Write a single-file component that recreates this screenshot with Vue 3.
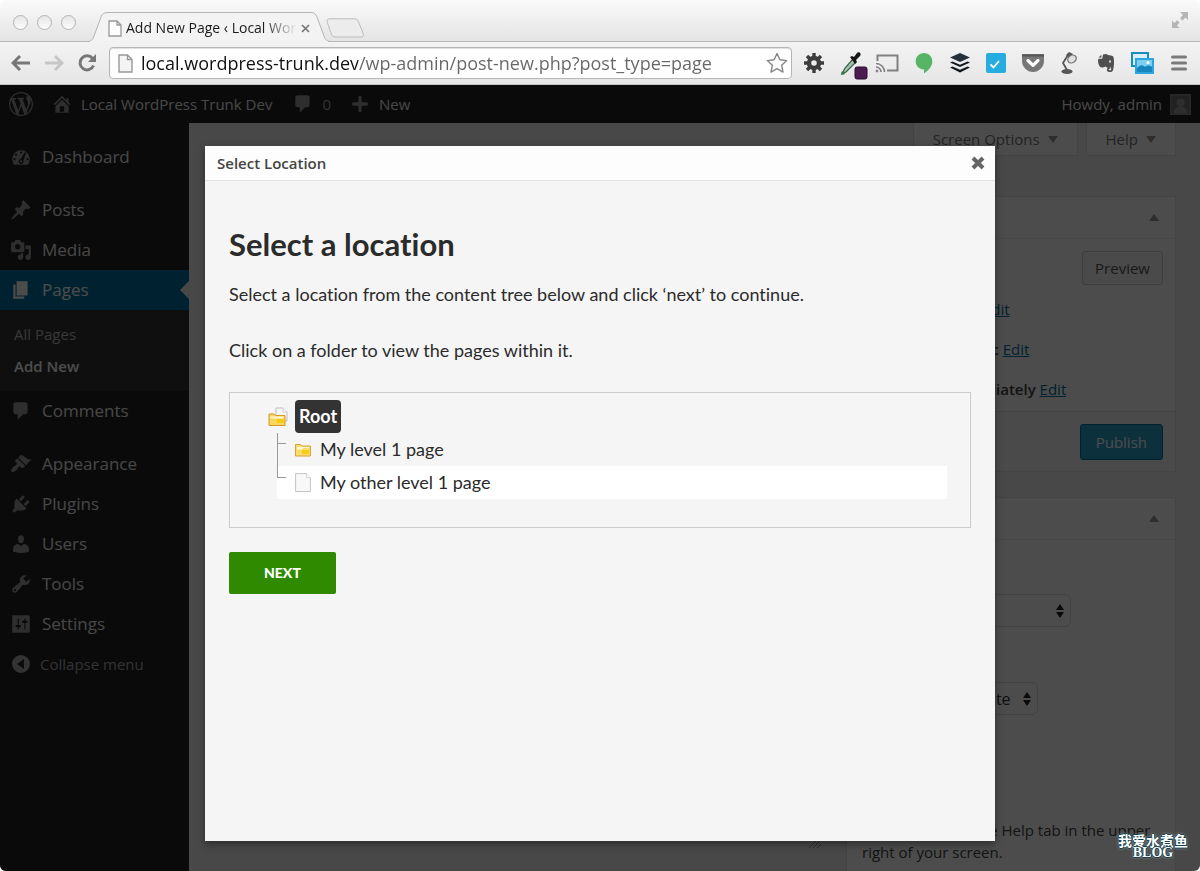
<script setup>
import { ref } from 'vue'

const url = ref('local.wordpress-trunk.dev/wp-admin/post-new.php?post_type=page')
const parent = ref('(no parent)')
const template = ref('Default Template')

const icons = {
  dashboard: 'M3.8 17h12.4A8 8 0 1 0 3.8 17zM10 5a1 1 0 1 1 0 2 1 1 0 0 1 0-2zM5.6 7a1 1 0 1 1 0 2 1 1 0 0 1 0-2zM4 11a1 1 0 1 1 0 2 1 1 0 0 1 0-2zM16 11a1 1 0 1 1 0 2 1 1 0 0 1 0-2zM13.6 5.6l1 .6-2.4 7.2a2.2 2.2 0 1 1-2.6-1.5zM10 13a1 1 0 1 0 0 2 1 1 0 0 0 0-2z',
  posts: 'M10.44 3.02l1.82-1.82 6.36 6.35-1.83 1.82c-1.05-.68-2.48-.57-3.41.36l-.75.75c-.92.93-1.04 2.35-.35 3.41l-1.83 1.82-2.41-2.41-2.8 2.79c-.42.42-3.38 2.71-3.8 2.29s1.86-3.39 2.28-3.81l2.79-2.79L4.1 9.36l1.83-1.82c1.05.69 2.48.57 3.4-.36l.75-.75c.93-.92 1.05-2.35.36-3.41z',
  media: 'M13 11V4c0-.55-.45-1-1-1h-1.67L9 1H5L3.67 3H2c-.55 0-1 .45-1 1v7c0 .55.45 1 1 1h10c.55 0 1-.45 1-1zM7 4.5c1.38 0 2.5 1.12 2.5 2.5S8.38 9.5 7 9.5 4.5 8.38 4.5 7 5.62 4.5 7 4.5zM14 6h5v10.5c0 1.38-1.12 2.5-2.5 2.5S14 17.88 14 16.5s1.12-2.5 2.5-2.5c.17 0 .34.02.5.05V9h-3V6zm-4 8.05V13h2v3.5c0 1.38-1.12 2.5-2.5 2.5S7 17.88 7 16.5 8.12 14 9.5 14c.17 0 .34.02.5.05z',
  pages: 'M6 15V2h10v13H6zm-1 1h8v2H3V5h2v11z',
  comments: 'M5 2h9c1.1 0 2 .9 2 2v7c0 1.1-.9 2-2 2h-2l-5 5v-5H5c-1.1 0-2-.9-2-2V4c0-1.1.9-2 2-2z',
  appearance: 'M14.48 11.06L7.41 3.99l1.5-1.5c.5-.56 2.3-.47 3.51.32 1.21.8 1.43 1.28 2.91 2.1 1.18.64 2.45 1.26 4.45.85zm-.71.71L6.7 4.7 4.93 6.47c-.39.39-.39 1.02 0 1.41l1.06 1.06c.39.39.39 1.03 0 1.42-.6.6-1.43 1.11-2.21 1.69-.35.26-.7.53-1.01.84C1.43 14.23.4 16.08 1.4 17.07c.99 1 2.84-.03 4.18-1.36.31-.31.58-.66.85-1.02.57-.78 1.08-1.61 1.69-2.21.39-.39 1.02-.39 1.41 0l1.06 1.06c.39.39 1.02.39 1.41 0z',
  plugins: 'M13.11 4.36L9.87 7.6 8 5.73l3.24-3.24c.35-.34 1.05-.2 1.56.32.52.51.66 1.21.31 1.55zm-8 1.77l.91-1.12 9.01 9.01-1.19.84c-.71.71-2.63 1.16-3.82 1.16H6.14L4.9 17.26c-.59.59-1.54.59-2.12 0-.59-.58-.59-1.53 0-2.12l1.24-1.24v-3.88c0-1.13.4-3.19 1.09-3.89zm7.26 3.97l3.24-3.24c.34-.35 1.04-.21 1.55.31.52.51.66 1.21.31 1.55l-3.24 3.25z',
  users: 'M10 9.25c-2.27 0-2.73-3.44-2.73-3.44C7 4.02 7.82 2 9.97 2c2.16 0 2.98 2.02 2.71 3.81 0 0-.41 3.44-2.68 3.44zm0 2.57L12.72 10c2.39 0 4.52 2.33 4.52 4.53v2.49s-3.65 1.13-7.24 1.13c-3.65 0-7.24-1.13-7.24-1.13v-2.49c0-2.25 1.94-4.48 4.47-4.48z',
  tools: 'M16.68 9.77c-1.34 1.34-3.3 1.67-4.95.99l-5.41 6.52c-.99.99-2.59.99-3.58 0s-.99-2.59 0-3.57l6.52-5.42c-.68-1.65-.35-3.61.99-4.95 1.28-1.28 3.12-1.62 4.72-1.06l-2.89 2.89 2.82 2.82 2.86-2.87c.53 1.58.18 3.39-1.08 4.65zM3.81 16.21c.4.39 1.04.39 1.43 0 .4-.4.4-1.04 0-1.43-.39-.4-1.03-.4-1.43 0-.39.39-.39 1.03 0 1.43z',
  settings: 'M18 17V3c0-.6-.4-1-1-1H3c-.6 0-1 .4-1 1v14c0 .6.4 1 1 1h14c.6 0 1-.4 1-1zM8 11h1c.55 0 1 .45 1 1s-.45 1-1 1H8v1.5c0 .28-.22.5-.5.5s-.5-.22-.5-.5V13H6c-.55 0-1-.45-1-1s.45-1 1-1h1V5.5c0-.28.22-.5.5-.5s.5.22.5.5V11zm5-2h-1c-.55 0-1-.45-1-1s.45-1 1-1h1V5.5c0-.28.22-.5.5-.5s.5.22.5.5V7h1c.55 0 1 .45 1 1s-.45 1-1 1h-1v5.5c0 .28-.22.5-.5.5s-.5-.22-.5-.5V9z',
  collapse: 'M10 1a9 9 0 1 1 0 18 9 9 0 0 1 0-18zM13 5l-7 5 7 5z',
  home: 'M16 8.5l1.53 1.53-1.06 1.06L10 4.6l-6.47 6.49-1.06-1.06L10 2.5l4 4v-2h2v4zm-6-2.46l6 5.99V18H4v-5.97zM12 17v-5H8v5h4z',
  plus: 'M8.5 3h3v5.5H17v3h-5.500V17h-3v-5.500H3v-3h5.500z',
  wordpress: 'M20 10c0-5.51-4.49-10-10-10C4.48 0 0 4.49 0 10c0 5.52 4.48 10 10 10 5.51 0 10-4.48 10-10zM7.78 15.37L4.37 6.22c.55-.02 1.17-.08 1.17-.08.5-.06.44-1.13-.06-1.11 0 0-1.45.11-2.37.11-.18 0-.37 0-.58-.01C4.12 2.69 6.87 1.11 10 1.11c2.33 0 4.45.87 6.05 2.34-.68-.11-1.65.39-1.65 1.58 0 .74.45 1.36.9 2.1.35.61.55 1.36.55 2.46 0 1.49-1.4 5-1.4 5l-3.03-8.37c.54-.02.82-.17.82-.17.5-.05.44-1.25-.06-1.22 0 0-1.44.12-2.38.12-.87 0-2.33-.12-2.33-.12-.5-.03-.56 1.2-.06 1.22l.92.08 1.26 3.41zM17.41 10c.24-.64.74-1.87.43-4.25.7 1.29 1.05 2.71 1.05 4.25 0 3.29-1.73 6.24-4.4 7.78.97-2.59 1.94-5.2 2.92-7.78zM6.1 18.09C3.12 16.65 1.11 13.53 1.11 10c0-1.3.23-2.48.72-3.59C3.25 10.3 4.67 14.2 6.1 18.09zm4.03-6.63l2.58 6.98c-.86.29-1.76.45-2.71.45-.79 0-1.57-.11-2.29-.33.81-2.38 1.62-4.74 2.42-7.1z'
}

const menuGroups = [
  [{ id: 'dashboard', label: 'Dashboard' }],
  [
    { id: 'posts', label: 'Posts' },
    { id: 'media', label: 'Media' },
    { id: 'pages', label: 'Pages', current: true, children: ['All Pages', 'Add New'] },
    { id: 'comments', label: 'Comments' }
  ],
  [
    { id: 'appearance', label: 'Appearance' },
    { id: 'plugins', label: 'Plugins' },
    { id: 'users', label: 'Users' },
    { id: 'tools', label: 'Tools' },
    { id: 'settings', label: 'Settings' }
  ]
]

const publishRows = [
  { label: 'Status:', value: 'Draft' },
  { label: 'Visibility:', value: 'Public' },
  { label: 'Publish', value: 'immediately' }
]
</script>

<template>
  <div class="browser">
    <header class="chrome">
      <div class="tabstrip">
        <div class="lights"><i></i><i></i><i></i></div>
        <div class="tab">
          <svg class="tab-shape" width="242" height="30" viewBox="0 0 242 30" aria-hidden="true">
            <path d="M0 29.500C4 29 5 27 6 24L13 5C14 2 16 .5 19 .5H223C226 .5 228 2 229 5L236 24C237 27 238 29 242 29.500" fill="#f3f3f3" stroke="#b4b4b4" />
            <path d="M2 30H240" stroke="#f1f1f1" stroke-width="2" />
          </svg>
          <svg class="doc" width="14" height="17" viewBox="0 0 14 17"><path d="M1 1h8l4 4v11H1zM9 1v4h4" fill="#fdfdfd" stroke="#999" stroke-width="1.300" /></svg>
          <span class="tab-title">Add New Page ‹ Local Word</span>
          <button class="tab-close" aria-label="Close tab"><svg width="9" height="9" viewBox="0 0 9 9"><path d="M1 1l7 7M8 1L1 8" stroke="#777" stroke-width="1.700" /></svg></button>
        </div>
        <button class="newtab" aria-label="New tab">
          <svg width="40" height="20" viewBox="0 0 40 20"><path d="M4 .8H28C31 .8 32 2 33 5L37 15C38 18 37 19 35 19H10C7 19 6 18 5 15L1.500 5C.5 2 1 .8 4 .8z" fill="#ececec" stroke="#bcbcbc" /></svg>
        </button>
        <button class="expand" aria-label="Full screen">
          <svg width="18" height="18" viewBox="0 0 18 18" fill="#b5b5b5"><path d="M9 1h8v8l-2.500-2.500-3 3-2.500-2.500 3-3zM1 17V9.500l2.400 2.400 2.600-2.600 2.500 2.500-2.600 2.600L8.500 17z" /></svg>
        </button>
      </div>
      <div class="toolbar">
        <div class="nav">
          <button aria-label="Back"><svg width="20" height="20" viewBox="0 0 20 20"><path d="M19 10H3M9 3l-7 7 7 7" fill="none" stroke="#777" stroke-width="3" /></svg></button>
          <button aria-label="Forward"><svg width="20" height="20" viewBox="0 0 20 20"><path d="M1 10H17M11 3l7 7-7 7" fill="none" stroke="#c6c6c6" stroke-width="3" /></svg></button>
          <button aria-label="Reload"><svg width="20" height="20" viewBox="0 0 20 20"><path d="M15.500 5.500A7 7 0 1 0 16.500 12.500" fill="none" stroke="#777" stroke-width="3" /><path d="M19 1v8h-8z" fill="#777" /></svg></button>
        </div>
        <div class="address">
          <svg width="15" height="19" viewBox="0 0 15 19"><path d="M1 1h8.500l4.500 4.500V18H1zM9.500 1v4.500H14" fill="#f4f4f4" stroke="#999" stroke-width="1.400" /></svg>
          <input v-model="url" class="url" type="text" aria-label="Address" spellcheck="false" />
          <button aria-label="Bookmark"><svg width="22" height="22" viewBox="0 0 22 22"><path d="M11 1.500l2.900 6.300 6.800.8-5 4.700 1.300 6.800-6-3.400-6 3.400 1.300-6.800-5-4.700 6.800-.8z" fill="#fff" stroke="#858585" stroke-width="1.400" stroke-linejoin="round" /></svg></button>
        </div>
        <div class="extensions">
          <button aria-label="Settings gear"><svg width="20" height="20" viewBox="-10 -10 20 20"><circle r="5" fill="none" stroke="#3d3d3d" stroke-width="4.400" /><path d="M0-10V-6M0 10V6M-10 0H-6M10 0H6M-7-7l2.800 2.800M7 7L4.200 4.200M-7 7l2.800-2.800M7-7L4.200-4.200" stroke="#3d3d3d" stroke-width="3.400" /></svg></button>
          <button aria-label="Colour picker"><svg class="picker" width="28" height="30" viewBox="-3 -3 28 30"><path d="M13 8L5 17l-3 6 4-2 10-10" fill="#9fc5ac" stroke="#3f5f4b" stroke-width="1.200" /><circle cx="3" cy="22" r="1.800" fill="#2e7d46" /><path d="M10 6l2-1 2 1 3-4c2-2 5 1 3 3l-4 4 1 2-2 2z" fill="#161616" /><rect x="15" y="16" width="12" height="12" rx="2" fill="#4b1c52" stroke="#2b0e30" /></svg></button>
          <button aria-label="Cast"><svg width="24" height="20" viewBox="0 0 24 20" fill="none" stroke="#808080"><path d="M2.500 8V2.500H22.500V17.500H12" stroke-width="2" /><path d="M1 10.500a8.500 8.500 0 0 1 8.500 8.500M1 14a5 5 0 0 1 5 5" stroke-width="1.600" /><circle cx="2" cy="18" r="1" fill="#808080" /></svg></button>
          <button aria-label="Hangouts"><svg width="18" height="22" viewBox="0 0 18 22"><path d="M9 1c5 0 8.300 3.700 8.300 8.200 0 5.300-4 9.300-8.300 12.200v-4C4 17.400.7 13.800.7 9.200.7 4.700 4 1 9 1z" fill="#57b565" /></svg></button>
          <button aria-label="Buffer"><svg width="22" height="22" viewBox="0 0 22 22"><path d="M11 1l10 4.500L11 10 1 5.500z" fill="#26303a" /><path d="M1 10.500l2.500-1.100L11 12.800l7.500-3.400L21 10.500 11 15zM1 15.500l2.500-1.100L11 17.800l7.500-3.400L21 15.500 11 20.500z" fill="#111820" /></svg></button>
          <button aria-label="Tasks"><svg width="20" height="20" viewBox="0 0 20 20"><rect width="20" height="20" rx="2" fill="#27ace0" /><path d="M4.500 11.500l3 3L13 8" fill="none" stroke="#fff" stroke-width="1.800" /></svg></button>
          <button aria-label="Pocket"><svg width="24" height="20" viewBox="0 0 24 20"><path d="M2 1h20c.6 0 1 .4 1 1v6c0 6-5 11-11 11S1 14 1 8V2c0-.6.4-1 1-1z" fill="#777" /><path d="M1 1.500h22v2H1z" fill="#555" /><path d="M7 7.500l5 4.800 5-4.800" fill="none" stroke="#fff" stroke-width="3.200" stroke-linecap="round" stroke-linejoin="round" /></svg></button>
          <button aria-label="Lamp"><svg width="20" height="24" viewBox="0 0 20 24"><ellipse cx="8" cy="20.500" rx="5.500" ry="2.500" fill="#555" /><path d="M8 19L4 12l5-8" fill="none" stroke="#555" stroke-width="1.800" /><path d="M7 4l3-3 4 2-3 5z" fill="#555" /><ellipse cx="13" cy="8" rx="4.500" ry="3.600" transform="rotate(-35 13 8)" fill="#e0e0e0" stroke="#777" stroke-width="1.400" /></svg></button>
          <button aria-label="Evernote"><svg width="18" height="20" viewBox="0 0 18 20" fill="#505050"><path d="M6 1.500C8 .6 10 .8 11 2l4 .8c1.500.3 2 2 2 6 0 3-.3 6.500-1 8.500-.5 1.500-2 1.700-3.500 1.700-2 0-2.600-1.200-2.600-2.400 0-1.800 1.500-2.300 3.200-2l.3 1.300c-1-.2-1.700 0-1.700.7 0 .8 1.200.9 2 .6 1-.5.5-2.700-.4-2.900-1.300-.2-2 .6-3.300.3-1-.3-1-1-1.500-1-.7 1-4.500 1.200-5.700-.2C1.500 12 1 9.500 1 7c0-1 .7-1.300 1.500-1.300h2c.7 0 .9-.3.900-1z" /><path d="M4.400 1.800v2.700H1.600z" /><ellipse cx="13" cy="8.500" rx="1" ry="1.200" fill="#ddd" /></svg></button>
          <button aria-label="Photos"><svg width="24" height="24" viewBox="0 0 24 24"><rect x="2" y="2" width="16" height="13" fill="#d9f0fb" stroke="#1a8cc0" stroke-width="2" /><rect x="6" y="8" width="17" height="14" fill="#7fcdf0" stroke="#2ba6dd" stroke-width="2" /><path d="M7 17c3-3 5-4 8-1 2-2 5-2 7 0v5H7z" fill="#1686bd" /><circle cx="18" cy="11.500" r="1.500" fill="#fff" /></svg></button>
          <button aria-label="Menu"><svg width="16" height="18" viewBox="0 0 16 18"><path d="M1.500 3h13M1.500 9h13M1.500 15h13" stroke="#7a7a7a" stroke-width="3" stroke-linecap="round" /></svg></button>
        </div>
      </div>
    </header>

    <div class="viewport">
      <div class="adminbar">
        <a href="#" class="bar-item" aria-label="About WordPress"><svg width="24" height="24" viewBox="0 0 20 20"><path :d="icons.wordpress" fill-rule="evenodd" /></svg></a>
        <a href="#" class="bar-item site"><svg width="22" height="22" viewBox="0 0 20 20"><path :d="icons.home" fill-rule="evenodd" /></svg>Local WordPress Trunk Dev</a>
        <a href="#" class="bar-item count"><svg width="22" height="22" viewBox="0 0 20 20"><path :d="icons.comments" /></svg><span>0</span></a>
        <a href="#" class="bar-item new"><svg width="22" height="22" viewBox="0 0 20 20"><path :d="icons.plus" /></svg>New</a>
        <a href="#" class="bar-item howdy">Howdy, admin
          <svg width="21" height="21" viewBox="0 0 21 21"><path d="M0 0h21v21H0z" fill="#888" /><path d="M1.500 1.500h18v18h-18z" fill="#707070" /><circle cx="10.500" cy="8.500" r="4" fill="#999" /><path d="M3.500 19.500c0-5 3-7 7-7s7 2 7 7z" fill="#999" /></svg>
        </a>
      </div>

      <div class="admin">
        <nav class="sidebar">
          <ul v-for="(group, g) in menuGroups" :key="g">
            <li v-for="item in group" :key="item.id">
              <a href="#" class="menu-item" :class="{ current: item.current }">
                <svg width="22" height="22" viewBox="0 0 20 20"><path :d="icons[item.id]" fill-rule="evenodd" /></svg>
                <span>{{ item.label }}</span>
              </a>
              <ul v-if="item.children" class="submenu">
                <li v-for="child in item.children" :key="child"><a href="#" :class="{ active: child === 'Add New' }">{{ child }}</a></li>
              </ul>
            </li>
          </ul>
          <button class="collapse">
            <svg width="20" height="20" viewBox="0 0 20 20"><path :d="icons.collapse" fill-rule="evenodd" /></svg>
            Collapse menu
          </button>
        </nav>

        <main class="content">
          <div class="screen-links">
            <button>Screen Options <i class="down"></i></button>
            <button>Help <i class="down"></i></button>
          </div>
          <div class="columns">
            <div class="editor">
              <svg width="14" height="8" viewBox="0 0 14 8"><path d="M1 8l7-7M5 8l6-6M9 8l4-4" stroke="#999" /></svg>
            </div>
            <aside class="side">
              <section class="box">
                <div class="box-head"><i class="up"></i></div>
                <div class="box-body publish">
                  <button class="preview">Preview</button>
                  <p v-for="row in publishRows" :key="row.label">{{ row.label }} <b>{{ row.value }}</b> <a href="#">Edit</a></p>
                </div>
                <div class="box-foot"><button class="primary">Publish</button></div>
              </section>
              <section class="box">
                <div class="box-head"><i class="up"></i></div>
                <div class="box-body attributes">
                  <label for="parent">Parent</label>
                  <div class="pick wide">
                    <select id="parent" v-model="parent"><option>(no parent)</option></select>
                    <svg width="8" height="16" viewBox="0 0 8 16"><path d="M0 7l4-6 4 6zM0 9l4 6 4-6z" fill="#222" /></svg>
                  </div>
                  <label for="template">Template</label>
                  <div class="pick">
                    <select id="template" v-model="template"><option>Default Template</option></select>
                    <svg width="8" height="16" viewBox="0 0 8 16"><path d="M0 7l4-6 4 6zM0 9l4 6 4-6z" fill="#222" /></svg>
                  </div>
                  <label for="order">Order</label>
                  <input id="order" type="text" value="0" />
                  <p>Need help? Use the Help tab in the upper right of your screen.</p>
                </div>
              </section>
            </aside>
          </div>
        </main>
      </div>

      <div class="overlay">
        <section class="modal" role="dialog" aria-labelledby="dialog-title">
          <div class="modal-bar">
            <span id="dialog-title">Select Location</span>
            <button aria-label="Close"><svg width="14" height="14" viewBox="0 0 14 14"><path d="M2 2l10 10M12 2L2 12" stroke="#666" stroke-width="4" /></svg></button>
          </div>
          <div class="modal-body">
            <h1>Select a location</h1>
            <p>Select a location from the content tree below and click ‘next’ to continue.</p>
            <p>Click on a folder to view the pages within it.</p>
            <div class="tree">
              <div class="root">
                <svg width="20" height="20" viewBox="0 0 20 20"><path d="M8 1h7l4 4v9H8z" fill="#f7f7f7" stroke="#bdbdbd" /><path d="M15 1v4h4" fill="#fff" stroke="#ccc" /><path d="M1 18.500V7h5l1.500 1.500H17V18.500z" fill="#f8d85c" stroke="#d8962a" /><path d="M2.500 11.500h13V9.500h-13z" fill="#fff6cf" /><path d="M9 12h7v4H9z" fill="#f5cd12" /></svg>
                <button>Root</button>
              </div>
              <ul>
                <li>
                  <svg class="branch" width="18" height="33" viewBox="0 0 18 33"><path d="M.5 0V33M0 10.500H9" fill="none" stroke="#999" /></svg>
                  <svg width="16" height="14" viewBox="0 0 16 14"><path d="M.5 13V1.500h5L7 3h8.500v10z" fill="#f9dd6c" stroke="#dca03a" /><path d="M2 6.500h5l1.500-1.500H14V4H2z" fill="#fff7d5" /><path d="M7 7h7v4H7z" fill="#f5cd12" /></svg>
                  <button>My level 1 page</button>
                </li>
                <li class="alt">
                  <svg class="branch" width="18" height="33" viewBox="0 0 18 33"><path d="M.5 0V11M0 11.500H9" fill="none" stroke="#999" /></svg>
                  <svg width="16" height="19" viewBox="0 0 16 19"><path d="M.6.6h11L15.400 4.500v14H.6z" fill="#f8f8f8" stroke="#c4c4c4" /><path d="M11.500.6v4h4" fill="#fff" stroke="#d4d4d4" /></svg>
                  <button>My other level 1 page</button>
                </li>
              </ul>
            </div>
            <button class="next">NEXT</button>
          </div>
        </section>
      </div>
      <div class="watermark"><span>我爱水煮鱼</span><b>BLOG</b></div>
    </div>
  </div>
</template>

<style>
body { background: #fff; }
</style>

<style scoped>
* { box-sizing: border-box; }
button { font: inherit; color: inherit; border: 0; background: none; padding: 0; }
ul { list-style: none; margin: 0; padding: 0; }
svg { display: block; flex: none; }
a { color: inherit; text-decoration: none; }

.browser { height: 100vh; display: flex; flex-direction: column; overflow: hidden; border-radius: 6px; font-family: "Open Sans", sans-serif; }
.chrome { flex: none; }
.tabstrip { height: 42px; display: flex; align-items: flex-end; background: linear-gradient(#fafafa, #e4e4e4); border-bottom: 1px solid #b8b8b8; }
.lights { display: flex; gap: 9px; padding: 0 12px 11px 13px; }
.lights i { width: 15px; height: 15px; border-radius: 50%; border: 1px solid #b3b3b3; background: linear-gradient(#e6e6e6, #fbfbfb); }
.tab { position: relative; width: 242px; height: 30px; margin-bottom: -1px; display: flex; align-items: center; padding: 2px 20px 0; }
.tab-shape { position: absolute; left: 0; bottom: 0; }
.doc { position: relative; }
.tab-title { position: relative; width: 172px; margin-left: 4px; font-size: 14px; line-height: 20px; white-space: nowrap; overflow: hidden; color: #1a1a1a; mask-image: linear-gradient(90deg, #000 80%, transparent); }
.tab-close { position: relative; margin-left: 4px; }
.newtab { margin: 0 0 3px -4px; }
.expand { margin: 0 11px 12px auto; }

.toolbar { height: 43px; display: flex; align-items: center; background: linear-gradient(#f3f3f3, #e6e6e6); border-bottom: 1px solid #c4c4c4; padding: 0 3px 0 11px; }
.nav { display: flex; gap: 13px; padding-right: 12px; }
.address { flex: 1; min-width: 0; height: 32px; display: flex; align-items: center; gap: 8px; padding: 0 3px 0 8px; background: #fff; border: 1px solid #b5b5b5; border-radius: 4px; box-shadow: inset 0 1px 1px #ddd; }
.url { flex: 1; min-width: 0; border: 0; outline: 0; padding: 0; font: 18px/26px "Open Sans", sans-serif; color: transparent; background: linear-gradient(90deg, #111 217px, #666 217px); background-clip: text; }
.extensions { width: 401px; margin-left: 4px; display: grid; grid-template-columns: repeat(11, 1fr); justify-items: center; align-items: center; }
.picker { overflow: visible; }

.viewport { position: relative; flex: 1; min-height: 0; display: flex; flex-direction: column; overflow: hidden; background: #f1f1f1; }
.adminbar { flex: none; height: 38px; display: flex; align-items: center; padding: 0 9px; background: #222; color: #eee; font-size: 15px; }
.bar-item { display: flex; align-items: center; }
.adminbar svg { fill: #999; }
.site { gap: 8px; margin-left: 18px; }
.count { gap: 8px; margin-left: 20px; color: #aaa; }
.new { gap: 8px; margin-left: 18px; }
.howdy { gap: 8px; margin-left: auto; }

.admin { flex: 1; min-height: 0; display: flex; }
.sidebar { flex: none; width: 189px; padding-top: 14px; background: #222; color: #eee; font-size: 17px; }
.sidebar > ul { margin-bottom: 13px; }
.menu-item { position: relative; height: 40px; display: flex; align-items: center; gap: 10px; padding-left: 10px; fill: #999; }
.menu-item span { padding-bottom: 2px; }
.menu-item.current { background: #0074a2; color: #fff; fill: #fff; }
.menu-item.current::after { content: ""; position: absolute; right: 0; top: 11px; border: 9px solid transparent; border-left: 0; border-right-color: #f1f1f1; }
.submenu { background: #333; padding: 8px 0 9px; font-size: 15px; color: #bbb; }
.submenu a { display: block; padding-left: 14px; line-height: 32px; }
.submenu .active { color: #fff; font-weight: 600; }
.collapse { display: flex; align-items: center; gap: 9px; height: 40px; margin-top: -13px; padding-left: 11px; font-size: 15px; color: #aaa; fill: #aaa; }

.content { flex: 1; min-width: 0; padding: 0 24px; color: #444; font-size: 15px; }
.screen-links { display: flex; justify-content: flex-end; gap: 8px; margin-bottom: 40px; color: #777; }
.screen-links button { height: 33px; display: flex; align-items: center; gap: 8px; padding: 0 19px; background: #fff; border: 1px solid #e0e0e0; border-top: 0; }
.down { border: 5px solid transparent; border-top: 7px solid #999; border-bottom: 0; }
.up { border: 5px solid transparent; border-bottom: 7px solid #999; border-top: 0; }
.columns { display: flex; justify-content: space-between; gap: 24px; }
.editor { flex: 1; display: flex; justify-content: flex-end; align-items: flex-end; height: 652px; }
.side { width: 330px; flex: none; }
.box { background: #fff; border: 1px solid #e5e5e5; margin-bottom: 25px; }
.box-head { height: 42px; display: flex; align-items: center; justify-content: flex-end; padding-right: 16px; border-bottom: 1px solid #eee; }
.publish { display: flex; flex-direction: column; padding: 12px 12px 2px; }
.preview { align-self: flex-end; height: 34px; padding: 0 12px; color: #555; background: #f7f7f7; border: 1px solid #ccc; border-radius: 3px; margin-bottom: 4px; }
.publish p { margin: 0; padding-left: 31px; line-height: 40px; }
.publish b { font-weight: 600; }
.publish a { color: #0074a2; text-decoration: underline; }
.box-foot { display: flex; justify-content: flex-end; padding: 12px 12px 11px; background: #f8f8f8; border-top: 1px solid #ddd; }
.primary { height: 36px; padding: 0 15px; color: #fff; background: #2ea2cc; border: 1px solid #0074a2; border-radius: 3px; font-weight: 500; }
.attributes { padding: 20px 12px; line-height: 22px; }
.attributes label { display: block; font-weight: 600; margin-bottom: 12px; }
.pick { display: grid; width: 179px; margin-bottom: 21px; align-items: center; }
.pick.wide { width: 212px; }
.pick select, .pick svg { grid-area: 1 / 1; }
.pick svg { justify-self: end; margin-right: 7px; pointer-events: none; }
.pick select { appearance: none; width: 100%; height: 33px; padding: 0 22px; font: inherit; font-size: 16px; color: #333; background: #fff; border: 1px solid #ddd; border-radius: 6px; }
.attributes input { display: block; width: 60px; height: 33px; border: 1px solid #ddd; }
.attributes p { margin: 16px 0 0; padding: 0 3px; }

.overlay { position: absolute; inset: 0; display: flex; justify-content: center; padding: 61px 24px 30px; background: rgba(0, 0, 0, 0.7); }
.modal { flex: 1; max-width: 790px; display: flex; flex-direction: column; background: #f5f5f5; box-shadow: 0 3px 8px rgba(0, 0, 0, 0.4); color: #2b2b2b; }
.modal-bar { flex: none; height: 35px; display: flex; align-items: center; justify-content: space-between; padding: 0 10px 0 12px; background: #fdfdfd; border-bottom: 1px solid #e2e2e2; font-size: 15px; font-weight: 600; color: #444; }
.modal-body { padding: 43px 24px 24px; font: 18px/28px Lato, sans-serif; font-variant-ligatures: none; }
h1 { margin: 0 0 16px; font-size: 31px; line-height: 40px; font-weight: 700; }
.modal-body p { margin: 0 0 28px; }
.tree { border: 1px solid #ccc; padding: 7px 23px 28px 38px; margin: 0 0 24px; line-height: 33px; }
.root { display: flex; align-items: center; gap: 7px; }
.root button { padding: 0 4px; background: #333; color: #fff; font-weight: 700; border-radius: 4px; }
.tree ul { margin-left: 9px; }
.tree li { display: flex; align-items: center; }
.tree li button { margin-left: 9px; }
.alt { background: #fff; }
.next { height: 42px; padding: 0 35px; background: #2f8a00; color: #fff; border-radius: 2px; font-size: 14px; font-weight: 900; }

.watermark { position: absolute; right: 12px; bottom: 12px; display: flex; flex-direction: column; align-items: center; color: #fff; font: 700 14px/14px "Noto Sans CJK SC", sans-serif; text-shadow: 1px 0 #17404d, -1px 0 #17404d, 0 1px #17404d, 0 -1px #17404d, 0 0 3px #dfe6e0; }
.watermark b { font-family: "Liberation Serif", serif; line-height: 12px; }
</style>
